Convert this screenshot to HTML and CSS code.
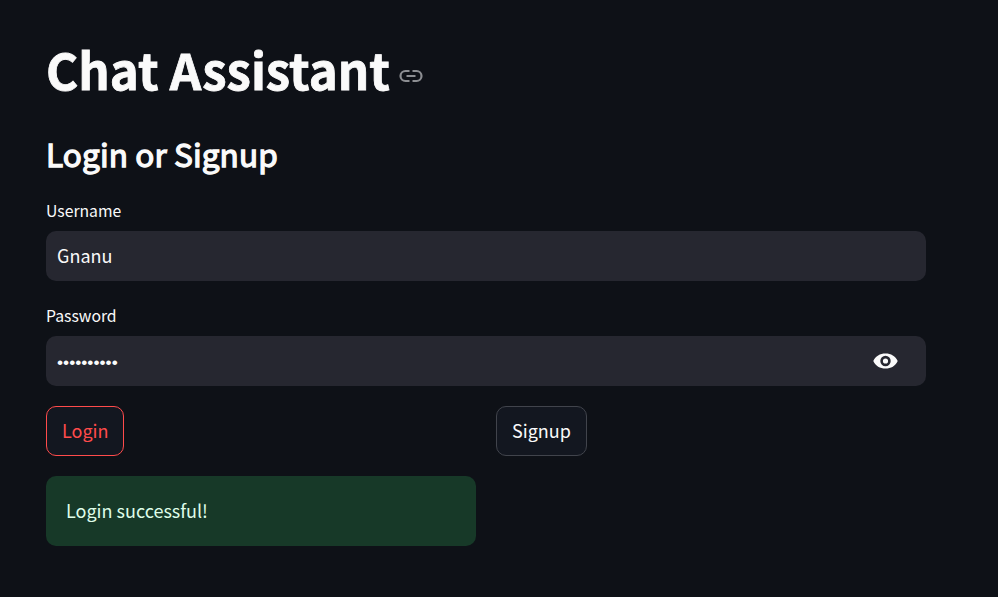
FILE: index.html
```html
<!DOCTYPE html>
<html lang="en">
<head>
<meta charset="utf-8">
<title>Chat Assistant</title>
<link rel="stylesheet" href="styles.css">
</head>
<body>
<main class="app">
  <div class="heading">
    <h1>Chat Assistant</h1>
    <svg class="anchor" viewBox="0 0 24 14" fill="none" stroke="currentColor" stroke-width="2.2"><path d="M10.500 2H6.500a5 5 0 0 0 0 10h4M13.500 2h4a5 5 0 0 1 0 10h-4M7.500 7h9"/></svg>
  </div>
  <h2>Login or Signup</h2>
  <label class="label" for="user">Username</label>
  <div class="field"><input id="user" type="text" value="Gnanu"></div>
  <label class="label second" for="pass">Password</label>
  <div class="field">
    <input id="pass" class="secret" type="password" value="abcdefghij">
    <svg class="eye" viewBox="0 0 25 16"><path fill="currentColor" fill-rule="evenodd" d="M0.300 8C2.500 3 7 .5 12.500 .5S22.500 3 24.700 8c-2.200 5-6.700 7.500-12.200 7.500S2.500 13 .3 8zm12.200 5.200a5.200 5.200 0 1 0 0-10.400 5.200 5.200 0 0 0 0 10.400zm0-2.600a2.600 2.600 0 1 1 0-5.200 2.600 2.600 0 0 1 0 5.200z"/></svg>
  </div>
  <div class="columns">
    <div class="column">
      <button class="button active">Login</button>
      <div class="alert">Login successful!</div>
    </div>
    <div class="column"><button class="button">Signup</button></div>
  </div>
</main>
</body>
</html>
```
FILE: styles.css
```css
* { box-sizing: border-box; }
body {
  margin: 0;
  min-height: 597px;
  background: #0e1117;
  color: #fafafa;
  font-family: "Noto Sans CJK SC", "Noto Sans", sans-serif;
}
.app { width: 880px; margin-left: 46px; padding-top: 33px; }
.heading { display: flex; align-items: center; gap: 9px; height: 72px; }
h1 { margin: 0; font-size: 49.200px; line-height: 72px; font-weight: 700; -webkit-text-stroke: .8px currentColor; }
.anchor { width: 24px; height: 14px; margin-top: 14px; color: #8c8e92; }
h2 { margin: 25px 0 0; font-size: 31.500px; line-height: 46px; font-weight: 400; letter-spacing: .13px; -webkit-text-stroke: 1.300px currentColor; }
.label { display: block; margin-top: 23px; height: 32px; font-size: 15.750px; line-height: 24px; }
.label.second { margin-top: 23px; }
.field { display: flex; align-items: center; height: 50px; padding: 0 28px 0 11px; border-radius: 10px; background: #262730; }
input { flex: 1; min-width: 0; padding: 0 0 2px; border: 0; outline: 0; background: none; color: inherit; font: 18px/28px "Noto Sans CJK SC", "Noto Sans", sans-serif; }
.secret { padding: 2px 0 0; font: 17.350px/28px "Liberation Sans", sans-serif; }
.eye { width: 25px; height: 16px; }
.columns { display: grid; grid-template-columns: 430px 430px; gap: 20px; margin-top: 20px; }
.button { display: block; height: 50px; padding: 0 15px 2px; border: 1px solid #41444c; border-radius: 10px; background: #131720; color: inherit; font: 18px/28px "Noto Sans CJK SC", "Noto Sans", sans-serif; }
.button.active { padding-right: 14px; border-color: #ff4b4b; color: #ff4b4b; }
.alert { height: 70px; margin-top: 20px; padding: 0 20px; border-radius: 10px; background: #173928; color: #dffde9; font-size: 18px; line-height: 68px; }
```
